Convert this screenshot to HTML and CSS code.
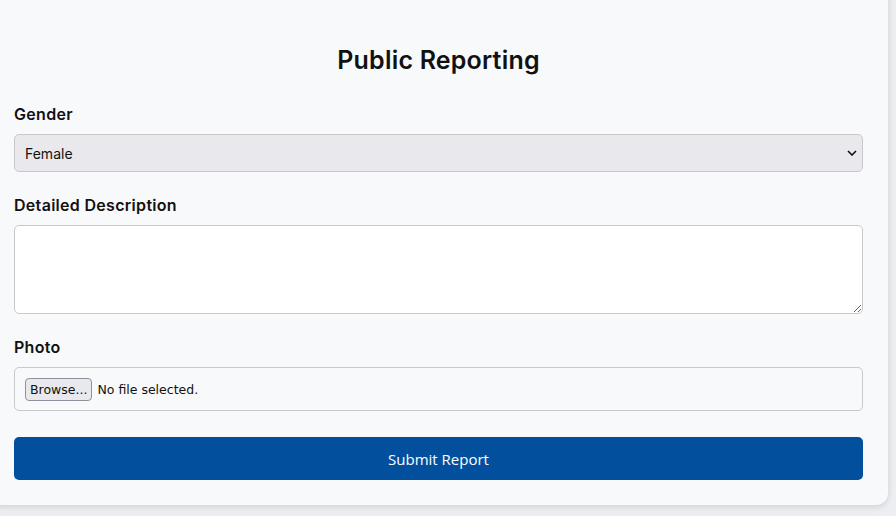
FILE: index.html
```html
<!DOCTYPE html>
<html lang="en">
<head>
<meta charset="utf-8">
<title>Public Reporting</title>
<link rel="stylesheet" href="styles.css">
</head>
<body>
<div class="card">
  <h2 class="title">Public Reporting</h2>
  <form class="form">
    <div class="field">
      <label class="label" for="gender">Gender</label>
      <select id="gender" class="select">
        <option>Female</option>
        <option>Male</option>
      </select>
    </div>
    <div class="field">
      <label class="label" for="desc">Detailed Description</label>
      <textarea id="desc" class="textarea"></textarea>
    </div>
    <div class="field">
      <label class="label">Photo</label>
      <div class="file">
        <span class="file-btn">Browse...</span>
        <span class="file-text">No file selected.</span>
      </div>
    </div>
    <button type="button" class="submit">Submit Report</button>
  </form>
</div>
</body>
</html>
```
FILE: styles.css
```css
html, body {
  margin: 0;
  padding: 0;
  background: #eceef1;
}
body {
  font-family: Inter, "Noto Sans", sans-serif;
  height: 516px;
  overflow: hidden;
}
.card {
  width: 849px;
  margin-left: -10px;
  margin-top: -20px;
  padding: 64px 25px 25px 24px;
  background: #f8f9fa;
  border-radius: 0 0 12px 12px;
  box-shadow: 0 2px 6px rgba(0, 0, 0, 0.12);
}
.title {
  margin: 0 0 28px;
  text-align: center;
  font-size: 25px;
  font-weight: 600;
  color: #111;
  line-height: 32px;
  letter-spacing: 0.2px;
}
.form {
  display: flex;
  flex-direction: column;
}
.field {
  display: flex;
  flex-direction: column;
  margin-bottom: 23px;
}
.label {
  font-size: 16px;
  font-weight: 600;
  color: #111;
  line-height: 20px;
  margin-bottom: 10px;
  letter-spacing: 0.3px;
}
.select {
  appearance: none;
  -webkit-appearance: none;
  height: 38px;
  border: 1px solid #c9c9cd;
  border-radius: 5px;
  background: #e9e8ec url("data:image/svg+xml,%3Csvg xmlns='http://www.w3.org/2000/svg' width='10' height='6' viewBox='0 0 10 6'%3E%3Cpath d='M1 1l4 4 4-4' fill='none' stroke='%23111' stroke-width='1.6'/%3E%3C/svg%3E") no-repeat right 5px center;
  padding: 0 10px;
  font-family: Inter, sans-serif;
  font-size: 14px;
  color: #111;
}
.textarea {
  height: 89px;
  box-sizing: border-box;
  border: 1px solid #c9c9cd;
  border-radius: 5px;
  background: #fff;
  resize: vertical;
}
.file {
  height: 44px;
  box-sizing: border-box;
  border: 1px solid #c9c9cd;
  border-radius: 5px;
  display: flex;
  align-items: center;
  padding: 0 10px;
  gap: 5px;
  font-family: "DejaVu Sans", Tahoma, sans-serif;
  font-size: 12.5px;
  color: #111;
}
.file-btn {
  border: 1px solid #8f8f9d;
  background: #e9e9ed;
  border-radius: 4px;
  padding: 2px 4px;
  line-height: 17px;
}
.submit {
  margin-top: 3px;
  height: 43px;
  border: none;
  border-radius: 5px;
  background: #02509d;
  color: #fff;
  font-family: "Open Sans", sans-serif;
  font-size: 15px;
  cursor: pointer;
}
```
